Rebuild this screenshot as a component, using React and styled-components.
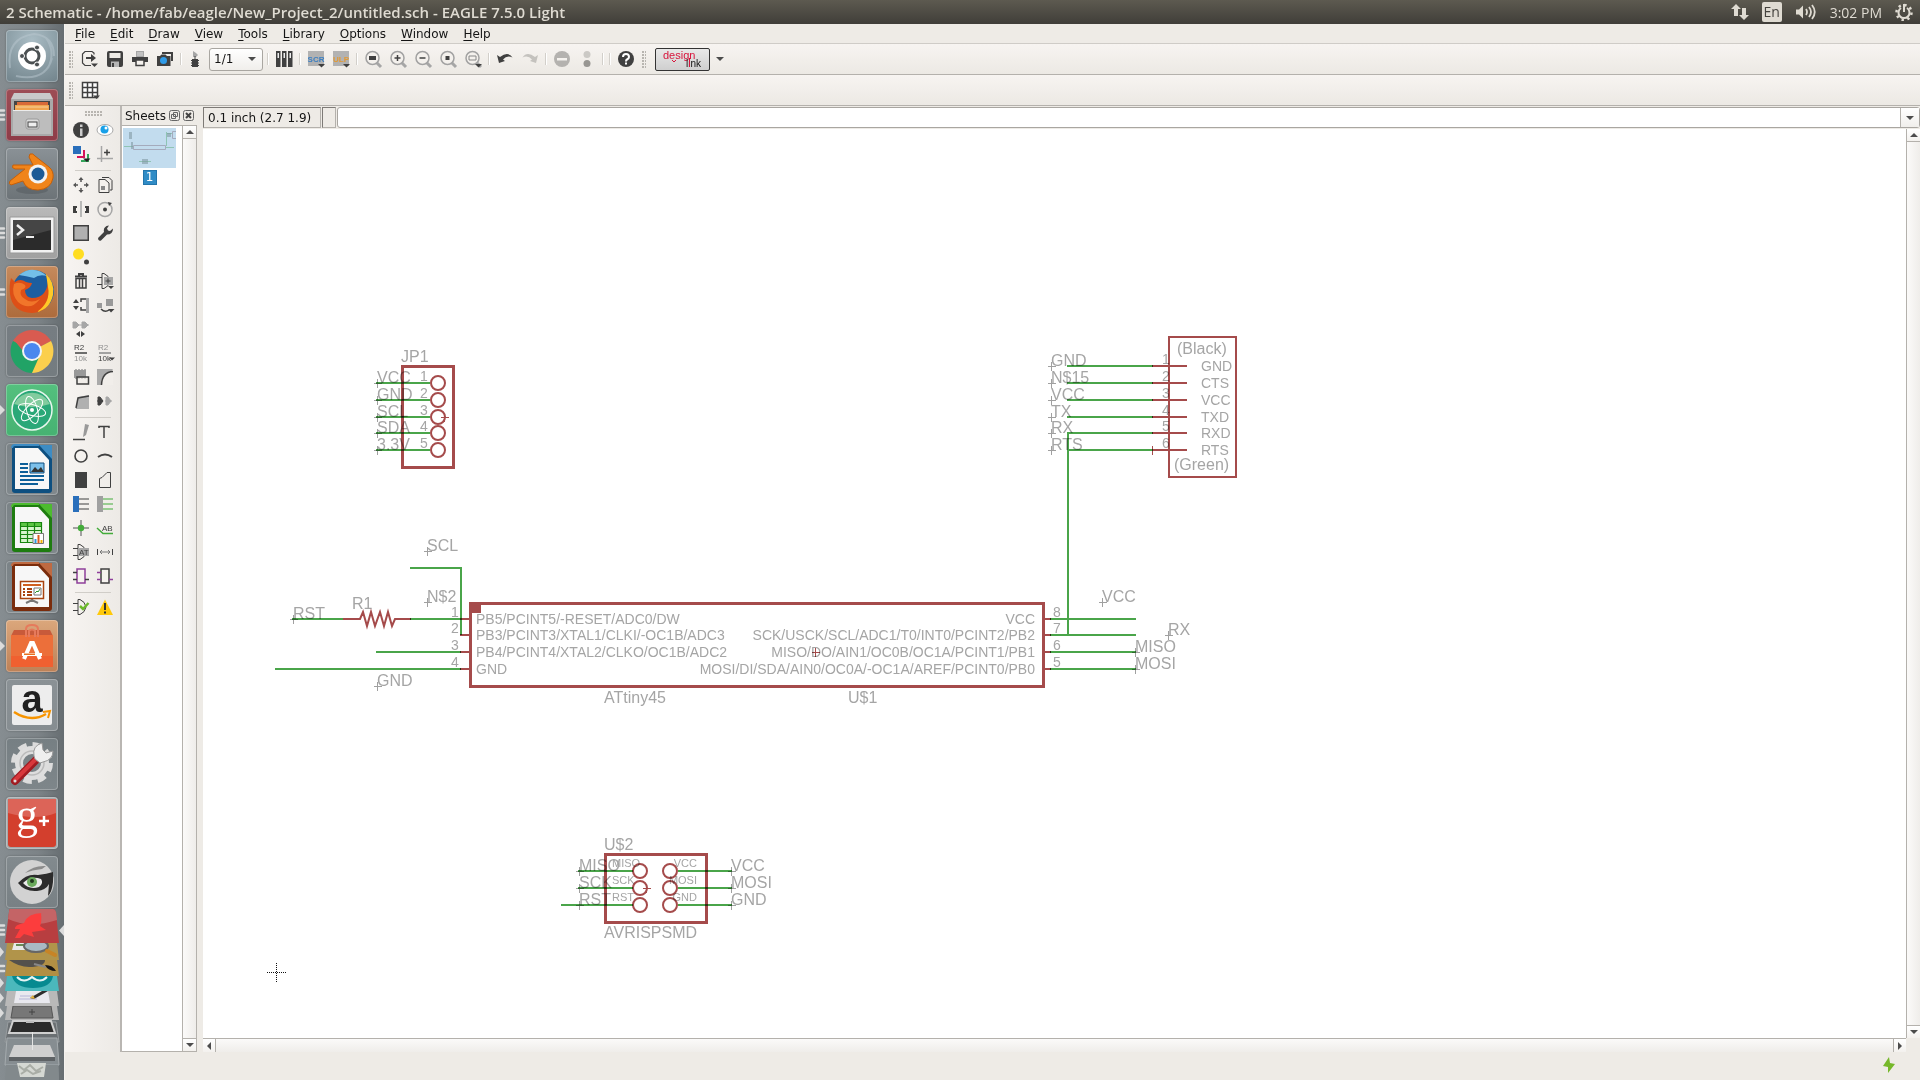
import React from "react";
import styled, { createGlobalStyle } from "styled-components";

const wire = "#4aa54a";
const part = "#a54b4b";
const label = "#a5a5a5";
const ink = "#404040";
const soft = "#a6a6a6";

const GlobalStyle = createGlobalStyle`
  * {
    box-sizing: border-box;
  }

  html, body, #root {
    height: 100%;
  }

  body {
    margin: 0;
    overflow: hidden;
    background: #eeebe6;
    color: #141414;
    font-family: "DejaVu Sans", sans-serif;
    font-size: 12px;
  }

  button {
    border: 0;
    padding: 0;
    background: none;
    color: inherit;
    font: inherit;
  }
`;

/* ---------- small toolbar icons, drawn on a 16px grid ---------- */

const more = <path d="M10 13h7l-3.500 3.500z" fill={ink} />;
const lens = (
  <>
    <path d="M11 11l5 5" stroke={soft} strokeWidth="3" />
    <circle cx="7.500" cy="7" r="6.500" fill="#f4f1ed" stroke="#a2a2a2" strokeWidth="1.500" />
  </>
);
const gate = (
  <path d="M5 .5h2q5 2 6 7.500q-1 5.500-6 7.500h-2zM0 4.500h5M0 11.500h5" fill="none" stroke={ink} />
);

const icons = {
  open: (
    <>
      <path d="M12 3.500V2L10 .500H3L.500 3v9L3 14.500h6" fill="none" stroke={ink} strokeWidth="1.200" />
      <path d="M4 6h5V3l5 4-5 4V8H4z" fill={ink} />
      <path d="M9 12.500h7L12.500 16z" fill={ink} />
    </>
  ),
  save: (
    <>
      <path d="M2 0h12q2 0 2 2v12q0 2-2 2H2q-2 0-2-2V2Q0 0 2 0z" fill={ink} />
      <path d="M2.500 2h11v5h-11z" fill="#eeebe6" />
      <path d="M4 10.500h8V16H4z" fill="#b5b5b5" />
      <path d="M5 12h2v4H5z" fill={ink} />
    </>
  ),
  print: (
    <>
      <path d="M4 0h8v6H4z" fill={soft} />
      <path d="M5 2h6M5 4h6" stroke="#ddd" />
      <path d="M0 6h16v5H0z" fill={ink} />
      <path d="M4 9h8v5.500H4z" fill="#f5f2ee" stroke={ink} strokeWidth="1.500" />
    </>
  ),
  cam: (
    <>
      <path d="M5 1h11v9h-2V3H5z" fill={ink} />
      <path d="M0 5h3l1.500-1.500h4L10 5h3.500v10H0z" fill={ink} />
      <circle cx="6.500" cy="9.500" r="3.500" fill="#2f9be8" />
    </>
  ),
  board: (
    <>
      <path d="M6 0l3 2 2 2-2 2H6z" fill={soft} />
      <path d="M5 8h6v8H5z" fill={ink} />
      <path d="M4 9.500h8M4 12h8M4 14.500h8M8 5v4" stroke={ink} />
    </>
  ),
  library: (
    <>
      <path d="M0 0h4.500v16H0zM6 0h4.500v16H6zM12 0h4.500v16H12z" fill={ink} />
      <path d="M1.500 2h1.500v5H1.500zM7.500 2H9v5H7.500zM13.500 2H15v5h-1.500z" fill="#eee" />
    </>
  ),
  scr: (
    <>
      <path d="M0 0h16v15H0z" fill="#b2b2b2" />
      <text x="8" y="11" textAnchor="middle" fontSize="8" fontWeight="700" fill="#3d7fc0">SCR</text>
      {more}
    </>
  ),
  ulp: (
    <>
      <path d="M0 0h16v15H0z" fill="#b2b2b2" />
      <text x="8" y="11" textAnchor="middle" fontSize="8" fontWeight="700" fill="#e29a36">ULP</text>
      {more}
    </>
  ),
  zoomFit: <>{lens}<path d="M4 5h7v4H4z" fill={ink} /></>,
  zoomIn: <>{lens}<path d="M4.500 7h6M7.500 4v6" stroke={ink} strokeWidth="1.500" /></>,
  zoomOut: <>{lens}<path d="M4.500 7h6" stroke={ink} strokeWidth="1.500" /></>,
  zoomDot: <>{lens}<path d="M5.500 5h4v4h-4z" fill={ink} /></>,
  zoomArea: <>{lens}<path d="M4 5h7v4H4z" fill="none" stroke="#888" />{more}</>,
  undo: <path d="M0 4l2 8 6-2-2-1.500Q10 4 15.500 6.500 11 0 3 6z" fill={ink} />,
  redo: <path d="M16 4l-2 8-6-2 2-1.500Q6 4 .5 6.500 5 0 13 6z" fill="#c4c2be" />,
  stop: (
    <>
      <circle cx="8" cy="8" r="8" fill="#b4b2af" />
      <path d="M3 7h10v2.500H3z" fill="#f5f2ee" />
    </>
  ),
  go: (
    <>
      <circle cx="8" cy="3.500" r="3.500" fill="#cbc9c5" />
      <circle cx="8" cy="12.500" r="3.500" fill="#989692" />
    </>
  ),
  help: (
    <>
      <circle cx="8" cy="8" r="8" fill={ink} />
      <path d="M5 6q0-3 3-3t3 3q0 1.500-2 2.500-1 .5-1 2" fill="none" stroke="#fff" strokeWidth="2" />
      <path d="M7 11.500h2v2H7z" fill="#fff" />
    </>
  ),
  grid: (
    <>
      <path d="M.500 .500h15v15H.500zM.500 5.500h15M.500 10.500h15M5.500 .500v15M10.500 .500v15" fill="#fff" stroke={ink} strokeWidth="1.500" />
      <path d="M11 13.500h7L14.500 17z" fill={ink} />
    </>
  ),
  info: (
    <>
      <circle cx="8" cy="8" r="8" fill={ink} />
      <path d="M7 2.500h2.500V5H7zM7 6.500h2.500V14H7z" fill="#ccc" />
    </>
  ),
  show: (
    <>
      <ellipse cx="8" cy="8" rx="8" ry="5.500" fill="#fff" stroke="#aaa" />
      <circle cx="7.500" cy="7.500" r="4" fill="#18a0e8" />
      <circle cx="9" cy="6" r="1.500" fill="#fff" />
    </>
  ),
  display: (
    <>
      <path d="M0 0h8v8H0z" fill="#2a6fbb" />
      <path d="M10 4h2v8H4v-2h6z" fill="#d4145a" />
      <path d="M14 8h2v8H8v-2h6z" fill="#35a35a" />
      <path d="M10 12.500h7.500L14 16z" fill="#222" />
    </>
  ),
  mark: (
    <>
      <path d="M4.500 0v16M0 12.500h16" stroke={soft} strokeWidth="1.500" />
      <path d="M7 6.500h6M10 3.500v6" stroke={ink} strokeWidth="1.500" />
    </>
  ),
  move: (
    <>
      <path d="M8 0l2.500 3h-5zM8 16l2.500-3h-5zM0 8l3-2.500v5zM16 8l-3-2.500v5z" fill="#555" />
      <path d="M8 2v3M8 11v3M2 8h3M11 8h3" stroke="#555" strokeWidth="1.500" />
    </>
  ),
  copy: (
    <>
      <path d="M5 .500h7l3 3V13h-2" fill="none" stroke={ink} />
      <path d="M2 2.500h6l4 3.500v9.500H2z" fill="#f4f1ed" stroke={ink} />
      <path d="M4 9h4v4H4z" fill="#888" />
    </>
  ),
  mirror: (
    <>
      <path d="M0 5h4v2H3v3h1v2H0zM16 5h-4v2h1v3h-1v2h4z" fill={ink} />
      <path d="M8 0v16" stroke={soft} strokeWidth="1.500" />
    </>
  ),
  rotate: (
    <>
      <circle cx="8" cy="8.500" r="7" fill="none" stroke={soft} strokeWidth="1.500" />
      <circle cx="8" cy="8.500" r="2" fill={ink} />
      <path d="M11 1l4 1-3 3z" fill={ink} />
    </>
  ),
  group: <path d="M.750 .750h14.500v14.500H.750z" fill="#b0b0b0" stroke={ink} strokeWidth="1.500" />,
  change: (
    <path d="M1 13l6-6q-1-4 2.500-6l2.500-.500-2 3 1 2 2 .500 3-2.500q0 6-6 6l-6 6q-3 1-3-2.500z" fill={ink} />
  ),
  paste: (
    <>
      <circle cx="5.500" cy="5" r="5.500" fill="#ffdd21" />
      <circle cx="13.500" cy="13" r="2.500" fill={ink} />
    </>
  ),
  trash: (
    <>
      <path d="M2 3.500h12M6 3V1h4v2" fill="none" stroke={ink} strokeWidth="2" />
      <path d="M3 5.500h10V15H3z" fill="none" stroke={ink} strokeWidth="1.500" />
      <path d="M6.500 5v10M9.500 5v10" stroke={ink} strokeWidth="1.500" />
    </>
  ),
  add: (
    <>
      {gate}
      <path d="M7 4h9v8H7z" fill={soft} />
      <path d="M8.500 8h5M11 5.500v5" stroke={ink} />
      <path d="M11 13h6l-3 3z" fill={ink} />
    </>
  ),
  pinswap: (
    <>
      <path d="M13 1h3v15h-3z" fill={soft} />
      <path d="M13 2H8v3M13 13H8v-3" fill="none" stroke={ink} strokeWidth="1.500" />
      <path d="M0 6l3-4 3 4zM0 9h6l-3 4z" fill={ink} />
    </>
  ),
  replace: (
    <>
      <path d="M0 6h5v5H0zM9 2h7v7H9z" fill="#999" />
      <path d="M4 12q4 4 8 1" fill="none" stroke={ink} strokeWidth="1.500" />
      <path d="M11 12h6.500L14 15.500z" fill={ink} />
    </>
  ),
  gateswap: (
    <>
      <path d="M0 1h3l3 3-3 3H0zM9 1h3l3 3-3 3H9zM5 4h11" fill={soft} stroke={soft} />
      <path d="M3 13l4-3v6zM12 13l-4-3v6z" fill={ink} />
    </>
  ),
  name: (
    <>
      <text x="1" y="5" fontSize="8" fill={ink}>R2</text>
      <path d="M2 8h12" stroke={ink} strokeWidth="1.500" />
      <text x="1" y="16" fontSize="8" fill="#8f8f8f">10k</text>
    </>
  ),
  value: (
    <>
      <text x="1" y="5" fontSize="8" fill="#8f8f8f">R2</text>
      <path d="M2 8h12" stroke="#888" strokeWidth="1.500" />
      <text x="1" y="16" fontSize="8" fill={ink}>10k</text>
      <path d="M12 12.500h6L15 15.500z" fill={ink} />
    </>
  ),
  smash: (
    <>
      <path d="M1 1h12v8H1z" fill="#999" />
      <path d="M3 0v10M6 0v10M9 0v10M12 0v10" stroke="#999" strokeWidth="1.500" />
      <path d="M4 8h11.500v7H4z" fill="#eeebe6" fillOpacity=".600" stroke={ink} strokeWidth="1.500" />
    </>
  ),
  miter: (
    <>
      <path d="M0 0h16L4 16H0z" fill="#aaa" />
      <path d="M16 2Q4 3 4 16h12z" fill="#f1eeea" />
      <path d="M16 2.500Q5 3 4.500 16" fill="none" stroke={ink} strokeWidth="1.500" />
    </>
  ),
  split: (
    <>
      <path d="M5 4l11-2v14H3z" fill="#b0b0b0" />
      <path d="M3 15L5 5l11-2" fill="none" stroke={ink} strokeWidth="1.500" />
    </>
  ),
  invoke: (
    <>
      <path d="M0 8h6M1 4h2l3 4-3 4H1z" fill={ink} stroke={ink} />
      <path d="M8 8h7M9 4h2l3 4-3 4H9z" fill={soft} stroke={soft} />
    </>
  ),
  line: (
    <>
      <path d="M0 15.500h12" stroke={ink} strokeWidth="1.500" />
      <path d="M12 0l4 1-3 10-3 2z" fill="#999" />
    </>
  ),
  text: <path d="M2 4V2.500h10V4M7 2.500V14" fill="none" stroke={ink} strokeWidth="1.500" />,
  circle: <circle cx="8" cy="8" r="6" fill="none" stroke={ink} strokeWidth="1.600" />,
  arc: <path d="M1 9q7-5 14 0" fill="none" stroke={ink} strokeWidth="2" />,
  rect: <path d="M2 0h12v16H2z" fill={ink} />,
  polygon: <path d="M2.500 15.500V6.500L5 5.500 10 .500h3.500v15z" fill="none" stroke={ink} />,
  bus: (
    <>
      <path d="M0 0h6v16H0z" fill="#2a6fbb" />
      <path d="M6 3h10M6 8h10M6 13h10" stroke={ink} strokeWidth="1.200" />
    </>
  ),
  net: (
    <>
      <path d="M0 0h6v16H0z" fill="#a0a0a0" />
      <path d="M6 3h10M6 8h10M6 13h10" stroke="#43ac3a" strokeWidth="1.200" />
    </>
  ),
  junction: (
    <>
      <path d="M0 8h16M8 0v16" stroke="#888" strokeWidth="1.500" />
      <circle cx="8" cy="8" r="3.200" fill="#43ac3a" />
    </>
  ),
  label: (
    <>
      <path d="M0 8l6 5.500h10" fill="none" stroke="#43ac3a" strokeWidth="1.500" />
      <text x="5" y="11" fontSize="8" fill={ink}>AB</text>
    </>
  ),
  attribute: (
    <>
      {gate}
      <path d="M5 4h11v8H5z" fill={soft} />
      <text x="6" y="11" fontSize="8" fill={ink}>AT</text>
    </>
  ),
  dimension: (
    <>
      <path d="M.500 5v6M15.500 5v6" stroke={ink} />
      <path d="M3 8h10M5 6L3 8l2 2M11 6l2 2-2 2" fill="none" stroke="#777" />
    </>
  ),
  module: (
    <>
      <path d="M4 1h8v14H4z" fill="#f6f3ef" stroke="#8f3f9b" strokeWidth="1.500" />
      <path d="M0 4.500h4M0 11.500h4M12 11.500h4" stroke={ink} strokeWidth="1.500" />
    </>
  ),
  port: (
    <>
      <path d="M4 1h8v14H4z" fill="#f6f3ef" stroke={ink} strokeWidth="1.500" />
      <path d="M0 4.500h4M0 11.500h4M12 11.500h4" stroke="#8f3f9b" strokeWidth="1.500" />
    </>
  ),
  erc: (
    <>
      {gate}
      <path d="M7 7l3 3 5.500-6" fill="none" stroke="#6cba2c" strokeWidth="2.500" />
    </>
  ),
  errors: (
    <>
      <path d="M8 .500L16 16H0z" fill="#ffc90a" />
      <path d="M8 4v7M8 12.500v2" stroke="#333" strokeWidth="2" />
    </>
  ),
};

const toolColumns = [
  [
    "info", "show", "display", "mark",
  ],
  [
    "move", "copy", "mirror", "rotate", "group", "change", "paste", null,
    "trash", "add", "pinswap", "replace", "gateswap", null, "name", "value",
    "smash", "miter", "split", "invoke",
  ],
  [
    "line", "text", "circle", "arc", "rect", "polygon", "bus", "net",
    "junction", "label", "attribute", "dimension", "module", "port",
  ],
  ["erc", "errors"],
];

function Icon({ name }) {
  return (
    <Glyph width="16" height="16" viewBox="0 0 16 16" aria-hidden="true">
      {icons[name]}
    </Glyph>
  );
}

function ToolButton({ name, narrow }) {
  return (
    <BarButton aria-label={name} $narrow={narrow}>
      <Icon name={name} />
    </BarButton>
  );
}

/* ---------- launcher ---------- */

const AmazonLetter = styled.text`
  fill: #202020;
  font-family: "Liberation Sans", sans-serif;
  font-size: 38px;
  font-weight: 700;
`;

const GoogleLetter = styled.text`
  fill: #fff;
  font-family: "Liberation Serif", serif;
  font-size: 44px;
`;

function Doc({ color, dark, children }) {
  return (
    <>
      <path d="M9 2h25l12 13v32q0 3-3 3H9q-3 0-3-3V5q0-3 3-3z" fill={dark} />
      <path d="M33 2h13v14z" fill={color} />
      <path d="M9 5h23l11 12v29H9z" fill="#f7f7f7" />
      <path d="M6 5q0-3 3-3h24" fill="none" stroke={color} strokeWidth="2" />
      {children}
    </>
  );
}

const apps = [
  {
    name: "Dash",
    bg: "radial-gradient(circle at 50% 20%, #a9bcc4, #71838b)",
    art: (
      <>
        <path d="M4 38Q0 8 28 4q20 2 20 22M10 46q30 6 36-18M40 8q10 14 2 30" fill="none" stroke="#b9c8cf" strokeOpacity=".500" strokeWidth="2" />
        <circle cx="26" cy="26" r="14" fill="#fff" />
        <circle cx="26" cy="26" r="7" fill="none" stroke="#4b5052" strokeWidth="3" />
        <circle cx="16" cy="26" r="2.500" fill="#4b5052" stroke="#fff" />
        <circle cx="31" cy="17.500" r="2.500" fill="#4b5052" stroke="#fff" />
        <circle cx="31" cy="34.500" r="2.500" fill="#4b5052" stroke="#fff" />
      </>
    ),
  },
  {
    name: "Files",
    bg: "linear-gradient(#9d4d55, #8e3c48)",
    pips: 3,
    art: (
      <>
        <path d="M8 4h36l3 6v37H5V10z" fill="#c9c9c9" />
        <path d="M5 10h42v37H5z" fill="#a9a9a9" />
        <path d="M8 12h36v10H8z" fill="#454545" />
        <path d="M11 13h31v3H11z" fill="#d86a38" />
        <path d="M9 16h34v6H9z" fill="#f0a550" />
        <path d="M10 18h32" stroke="#f7d19a" />
        <path d="M7 21h38v24H7z" fill="#bdbdbd" />
        <path d="M7 21.500h38" stroke="#ececec" />
        <rect x="20" y="30" width="13" height="10" rx="2" fill="#ddd" stroke="#999" />
        <rect x="22" y="33" width="9" height="5" fill="#eee" stroke="#444" />
      </>
    ),
  },
  {
    name: "Blender",
    bg: "linear-gradient(#8a9196, #6c7377)",
    art: (
      <>
        <ellipse cx="26" cy="42" rx="16" ry="4" fill="#4b5154" opacity=".400" />
        <path d="M24 6q3-1 5 2l14 11q5 4 4 11-2 11-15 12-12 0-15-9L5 37q-3-1-1-4l15-12H9q-4-1-2-4h20l-4-8z" fill="#f0841a" stroke="#c65f08" />
        <circle cx="32" cy="26" r="9.500" fill="#f2f2f2" />
        <circle cx="32" cy="26" r="6.500" fill="#1b5a96" />
      </>
    ),
  },
  {
    name: "Terminal",
    bg: "linear-gradient(#b9b9b9, #a0a0a0)",
    pips: 3,
    art: (
      <>
        <path d="M4 10h44v36H4z" fill="#f2f2f2" stroke="#999" />
        <path d="M7 13h38v30H7z" fill="#2b2b2b" />
        <path d="M7 13h38v10L7 33z" fill="#454545" />
        <path d="M11 18l6 5-6 5" fill="none" stroke="#eee" strokeWidth="2.500" />
        <path d="M20 30h8" stroke="#eee" strokeWidth="2" />
      </>
    ),
  },
  {
    name: "Firefox",
    bg: "linear-gradient(#c68a5c, #ad6b3c)",
    pips: 2,
    art: (
      <>
        <circle cx="27" cy="25" r="21" fill="#1d5e9f" />
        <path d="M13 9q14-11 28 1-8-2-13 2-8-2-15-3z" fill="#73bfe8" />
        <path d="M5 12l4 4q5-4 11 0 3 1 6 1-1 5-7 7 0 7 7 8 8 0 12-5 6-8 2-18 8 8 6 20-3 17-20 18Q6 46 4 28q-1-9 1-16z" fill="#dd4f17" />
        <path d="M40 8q9 8 7 21-3 14-16 17 14-10 11-25-1-7-2-13z" fill="#ffc928" />
        <path d="M8 18q6-3 11 1 2 3-4 5-2 6 4 9 6 5 15 0-10 13-22 3-7-8-4-18z" fill="#f1762a" />
      </>
    ),
  },
  {
    name: "Chrome",
    bg: "linear-gradient(#767d82, #747c80)",
    art: (
      <>
        <path d="M26 26L7 16A22 22 0 0 1 45 16z" fill="#d95b50" />
        <path d="M26 26l19-10A22 22 0 0 1 26 48z" fill="#fbcf4d" />
        <path d="M26 26L7 16A22 22 0 0 0 26 48l8-18z" fill="#21a366" />
        <path d="M17 26L8 15h30l8 1H27z" fill="#d95b50" />
        <circle cx="26" cy="26" r="10" fill="#f3f3f3" />
        <circle cx="26" cy="26" r="8" fill="#4b87ee" />
      </>
    ),
  },
  {
    name: "Atom",
    bg: "linear-gradient(#54c07e, #46b272)",
    pips: "arrow",
    art: (
      <>
        <circle cx="26" cy="26" r="20" fill="#2aa878" stroke="#e8f7ee" strokeWidth="1.500" />
        <path d="M8 20a20 20 0 0 1 36 0q-18 6-36 0z" fill="#a8dcae" opacity=".700" />
        <ellipse cx="26" cy="26" rx="14" ry="5.500" fill="none" stroke="#fff" transform="rotate(15 26 26)" />
        <ellipse cx="26" cy="26" rx="14" ry="5.500" fill="none" stroke="#fff" transform="rotate(75 26 26)" />
        <ellipse cx="26" cy="26" rx="14" ry="5.500" fill="none" stroke="#fff" transform="rotate(135 26 26)" />
        <circle cx="26" cy="26" r="2" fill="#fff" />
      </>
    ),
  },
  {
    name: "Writer",
    bg: "linear-gradient(#7b8387, #80888c)",
    art: (
      <Doc color="#3d8cc4" dark="#0d4f80">
        <path d="M14 21h8M14 25h8M14 29h8M14 33h24M14 37h24M14 41h18" stroke="#0d5f99" strokeWidth="2" />
        <path d="M24 20h14v10H24z" fill="#7cc0ea" stroke="#0d4f80" />
        <path d="M25 29l4-5 3 3 3-3 3 5z" fill="#333" />
      </Doc>
    ),
  },
  {
    name: "Calc",
    bg: "linear-gradient(#7b8387, #80888c)",
    art: (
      <Doc color="#4dbb2f" dark="#1e7c10">
        <path d="M14 20h22v21H14z" fill="#d6f5cd" />
        <path d="M14 20h22v4H14z" fill="#5cc544" />
        <path d="M14.500 20.500h21v20h-21zM14 24.500h22M14 28.500h22M14 32.500h22M14 36.500h22M21.500 20v21M28.500 20v21" fill="none" stroke="#178510" strokeWidth="1.200" />
        <path d="M27 31.500h10.500v10H27z" fill="#fff" stroke="#777" />
        <path d="M28.500 37h2v4h-2z" fill="#2b98dc" />
        <path d="M31.500 33h2v8h-2z" fill="#dc5a1c" />
        <path d="M34.500 38h2v3h-2z" fill="#f0b400" />
      </Doc>
    ),
  },
  {
    name: "Impress",
    bg: "linear-gradient(#7b8387, #80888c)",
    art: (
      <Doc color="#bf6a42" dark="#7a2c0c">
        <path d="M26 37v4M20 42l6-3 6 3" fill="none" stroke="#777" strokeWidth="2" />
        <path d="M14.500 20.500h23v17h-23z" fill="#fff" stroke="#a84310" strokeWidth="1.500" />
        <path d="M17 24h18" stroke="#d06020" strokeWidth="2" />
        <path d="M17 28h2M17 31h2M17 34h2M21 28h5M21 31h5M21 34h5" stroke="#a84310" strokeWidth="2" />
        <path d="M28 27h7v7h-7z" fill="#fff" stroke="#777" />
        <path d="M29 32l2-2 1 1 2-3" fill="none" stroke="#2b9a30" />
      </Doc>
    ),
  },
  {
    name: "Software",
    bg: "linear-gradient(#dba77c, #bd8157)",
    pips: "arrow",
    art: (
      <>
        <path d="M8 10h36l3 6H5z" fill="#c85a3a" />
        <path d="M5 15h42v32H5z" fill="#ec6f3a" />
        <path d="M5 36h42v11H5z" fill="#f06030" />
        <path d="M20 17V9q0-4 6-4t6 4v8M23 17v-6q3-3 6 0v6" fill="none" stroke="#e67a5c" strokeWidth="2" />
        <path d="M18 39l7-16h2l7 16" fill="none" stroke="#fff" strokeWidth="4" />
        <path d="M16 33h20v3H16z" fill="#fff" />
        <path d="M18 33.500h11v1.500H18z" fill="#e87020" />
      </>
    ),
  },
  {
    name: "Amazon",
    bg: "linear-gradient(#8a9195, #868d91)",
    art: (
      <>
        <rect x="6" y="6" width="40" height="40" rx="2" fill="#ededed" />
        <AmazonLetter x="26" y="33" textAnchor="middle">a</AmazonLetter>
        <path d="M8 33q17 11 32 2" fill="none" stroke="#f79400" strokeWidth="2.500" />
        <path d="M37 33l7-1-2 7" fill="none" stroke="#f79400" strokeWidth="2" />
      </>
    ),
  },
  {
    name: "Settings",
    bg: "linear-gradient(#767f83, #7e868a)",
    art: (
      <>
        <circle cx="26" cy="25" r="18.500" fill="none" stroke="#dcdcdc" strokeWidth="5" strokeDasharray="8.530 6" />
        <circle cx="26" cy="25" r="13" fill="none" stroke="#dedede" strokeWidth="8" />
        <circle cx="26" cy="25" r="12" fill="none" stroke="#bbb" strokeWidth="1.500" />
        <path d="M9 43L32 20" stroke="#a01c22" strokeWidth="8" strokeLinecap="round" />
        <path d="M9 42L31 20" stroke="#d8383c" strokeWidth="4" strokeLinecap="round" />
        <path d="M28 18q-2-10 8-13l1 7 3 3 7-2q0 9-10 11l-3 1-5-4z" fill="#efefef" stroke="#999" />
        <circle cx="9" cy="43" r="1.500" fill="#ddd" />
      </>
    ),
  },
  {
    name: "Google+",
    bg: "#a3a9ab",
    art: (
      <>
        <rect x="2" y="2" width="48" height="48" rx="3" fill="#d33f2d" />
        <path d="M2 2h48v14Q30 24 2 16z" fill="#dc6458" />
        <GoogleLetter x="21" y="32" textAnchor="middle">g</GoogleLetter>
        <path d="M33 24h10M38 19v10" stroke="#fff" strokeWidth="2.500" />
      </>
    ),
  },
  {
    name: "Eye",
    bg: "linear-gradient(#828a8e, #788084)",
    art: (
      <>
        <circle cx="26" cy="26" r="22" fill="#d2d2d2" />
        <path d="M19 17Q28 9 40 10L36 13Q26 14 19 17z" fill="#8b8b8b" />
        <path d="M12 27q9-10 20-8 9-1 15-3v10q-1 10-5 14l1-12q-3 6-12 7-12 1-19-8z" fill="#2c2c2c" />
        <path d="M17 27q8-8 18-4 3 4-2 8-10 3-16-4z" fill="#e9e9e9" />
        <circle cx="26" cy="26" r="5" fill="#6aa95c" />
        <circle cx="26" cy="25" r="2" fill="#20381e" />
      </>
    ),
  },
];

function Pips({ kind }) {
  return (
    <PipColumn width="6" height="16" viewBox="0 0 6 16" aria-hidden="true">
      {kind === "arrow" && <path d="M0 3l5 5-5 5z" fill="#dcdcdc" />}
      {kind === 3 && (
        <path d="M0 3.500h4M0 8h4M0 12.500h4" stroke="#dcdcdc" strokeWidth="2.500" strokeLinecap="round" />
      )}
      {kind === 2 && (
        <path d="M0 5.500h4M0 10.500h4" stroke="#dcdcdc" strokeWidth="2.500" strokeLinecap="round" />
      )}
    </PipColumn>
  );
}

// the launcher entries that are folded together at the bottom
function FoldedApps() {
  return (
    <Stack width="64" height="171" viewBox="0 0 64 171" aria-hidden="true">
      <path d="M8 129h48l2 14 1 28H5V143z" fill="#858c90" />
      <path d="M8 113h48l3 20H5z" fill="#6a6f72" stroke="#989da0" />
      <path d="M13 112h38l4 12H9z" fill="#2b2b2b" stroke="#cfcfcf" strokeWidth="2" />
      <path d="M26 113h8" stroke="#bbb" strokeWidth="2" />
      <path d="M7 97h50l2 14H5z" fill="#b5b5b5" />
      <path d="M13 97h38l2 12H11z" fill="#777" stroke="#555" />
      <path d="M29 103h6M32 100v6" stroke="#444" />
      <path d="M7 82h50l2 15H5z" fill="#b9b9b9" />
      <path d="M16 82h32l2 12H14z" fill="#e9e9ef" />
      <path d="M20 87h14M19 90h18" stroke="#b5b5d8" />
      <path d="M30 89l12-7h6l-14 8z" fill="#2c2c2c" />
      <path d="M30 89l3-3 2 4z" fill="#e0b040" />
      <path d="M7 67h50l2 15H5z" fill="#4bb8bc" />
      <path d="M12 67h41q-2 12-20 12T12 67z" fill="#078a90" />
      <path d="M17 68q7 7 15 0 8 7 15 0" fill="none" stroke="#e6f4f4" strokeWidth="2" />
      <path d="M7 51h50l2 16H5z" fill="#b18f44" />
      <path d="M9 51h36q0 7-16 7-10 0-20-7z" fill="#54514c" />
      <path d="M34 55l12 3" stroke="#888" strokeWidth="2" />
      <path d="M45 56q8 0 11 6-8 0-11-6z" fill="#151515" />
      <path d="M7 34h50l2 17H5z" fill="#b1944a" />
      <path d="M14 34h18v7H12z" fill="#e9e9e9" />
      <path d="M16 36h12" stroke="#688b54" strokeWidth="2" />
      <ellipse cx="36" cy="37" rx="12" ry="6" fill="#a9bac4" stroke="#666" strokeWidth="2" />
      <path d="M47 42l8 4" stroke="#c78426" strokeWidth="4" strokeLinecap="round" />
      <path d="M10 0h43q2 0 3 3l3 31H5L9 3q0-3 1-3z" fill="#b83e40" />
      <path d="M10 0h43q2 0 3 3l1 8Q30 20 8 10L9 3q0-3 1-3z" fill="#c46466" />
      <path d="M42 4q-14 0-18 10-10 2-9 6l5 0-5 9h5l4-4 10 3-2-5 14-2-6-4q2-4 1-13z" fill="#fc3d3d" />
      <path d="M64 16v11l-5-5.500z" fill="#dcdcdc" />
      <path d="M0 16.500h4M0 21h4M0 25.500h4M0 57h4M0 62h4" stroke="#dcdcdc" strokeWidth="2.500" strokeLinecap="round" />
      <path d="M0 38l4 5-4 5zM0 69l4 5-4 5zM0 84l4 5-4 5zM0 99l4 5-4 5z" fill="#dcdcdc" />
      <path d="M7 129h50l2 27H5z" fill="#868d91" stroke="#a5abae" />
      <path d="M14 136h36l5 12v4H9v-4z" fill="#cfcfcf" />
      <path d="M9 148h46v4H9z" fill="#5e6265" />
      <path d="M32.500 123v18" stroke="#e5e5e5" />
      <path d="M6 156h52l1 15H5z" fill="#82898c" />
      <path d="M17 154h29l-2 14H20z" fill="#d5d8d3" />
      <path d="M19 157l5 4 6-5 6 6 7-4M21 165l6-4 6 4 8-3" fill="none" stroke="#a9ada6" strokeWidth="2" />
    </Stack>
  );
}

/* ---------- schematic sheet ---------- */

function Txt({ x, y, size = 16, end, children }) {
  return (
    <text x={x} y={y} fontSize={size} textAnchor={end ? "end" : "start"} fill={label}>
      {children}
    </text>
  );
}

function Cross({ x, y, color = "#a0a0a0" }) {
  return <path d={`M${x - 3} ${y + 0.5}h8M${x + 0.5} ${y - 4}v9`} stroke={color} fill="none" />;
}

const jp1 = [["VCC", 383], ["GND", 400], ["SCL", 417], ["SDA", 433], ["3.3V", 450]];
const ftdi = [
  ["GND", "GND", 366], ["N$15", "CTS", 383], ["VCC", "VCC", 400],
  ["TX", "TXD", 417], ["RX", "RXD", 433], ["RTS", "RTS", 450],
];
const chip = [
  [619, "PB5/PCINT5/-RESET/ADC0/DW", "VCC"],
  [635, "PB3/PCINT3/XTAL1/CLKI/-OC1B/ADC3", "SCK/USCK/SCL/ADC1/T0/INT0/PCINT2/PB2"],
  [652, "PB4/PCINT4/XTAL2/CLKO/OC1B/ADC2", "MISO/DO/AIN1/OC0B/OC1A/PCINT1/PB1"],
  [669, "GND", "MOSI/DI/SDA/AIN0/OC0A/-OC1A/AREF/PCINT0/PB0"],
];
const isp = [["MISO", "VCC", 871], ["SCK", "MOSI", 888], ["RST", "GND", 905]];
const netLabels = [
  ["SCL", 427, 551], ["N$2", 427, 602], ["RST", 293, 619], ["GND", 377, 686],
  ["VCC", 1102, 602], ["RX", 1168, 635], ["MISO", 1135, 652], ["MOSI", 1135, 669],
];

function Schematic() {
  return (
    <Drawing width="1100" height="890" viewBox="203 129 1100 890" role="img" aria-label="Schematic sheet">
      <g>
        <Txt x={401} y={362}>JP1</Txt>
        {jp1.map(([name, y], i) => (
          <g key={name}>
            <Txt x={377} y={y}>{name}</Txt>
            <Txt x={420} y={y - 2} size={14}>{i + 1}</Txt>
            <Cross x={377} y={y} />
          </g>
        ))}
        {netLabels.map(([name, x, y]) => (
          <g key={name + x}>
            <Txt x={x} y={y}>{name}</Txt>
            <Cross x={x} y={y} />
          </g>
        ))}
        <Txt x={352} y={609}>R1</Txt>
        {chip.map(([y, left, right], i) => (
          <g key={y}>
            <Txt x={451} y={y - 2} size={14}>{i + 1}</Txt>
            <Txt x={1053} y={y - 2} size={14}>{8 - i}</Txt>
            <Txt x={476} y={y + 5} size={14}>{left}</Txt>
            <Txt x={1035} y={y + 5} size={14} end>{right}</Txt>
          </g>
        ))}
        <Txt x={604} y={703}>ATtiny45</Txt>
        <Txt x={848} y={703}>U$1</Txt>
        {ftdi.map(([net, pin, y], i) => (
          <g key={pin}>
            <Txt x={1051} y={y}>{net}</Txt>
            <Cross x={1051} y={y} />
            <Txt x={1162} y={y - 2} size={14}>{i + 1}</Txt>
            <Txt x={1201} y={y + 5} size={14}>{pin}</Txt>
          </g>
        ))}
        <Txt x={1177} y={354}>(Black)</Txt>
        <Txt x={1174} y={470}>(Green)</Txt>
        <Txt x={604} y={850}>U$2</Txt>
        <Txt x={604} y={938}>AVRISPSMD</Txt>
        {isp.map(([left, right, y]) => (
          <g key={y}>
            <Txt x={579} y={y}>{left}</Txt>
            <Cross x={579} y={y} />
            <Txt x={731} y={y}>{right}</Txt>
            <Cross x={731} y={y} />
            <Txt x={612} y={y - 4} size={11}>{left}</Txt>
            <Txt x={697} y={y - 4} size={11} end>{right}</Txt>
          </g>
        ))}
      </g>

      <Layer stroke={part}>
        <path d="M402.500 366.500h51v101h-51zM470.500 603.500h573v83h-573zM605.500 854.500h101v68h-101z" strokeWidth="3" strokeLinejoin="round" />
        <path d="M1169 337h67v140h-67z" strokeWidth="2" />
        <path d="M470 603h11v10h-11z" fill={part} stroke="none" />
        {jp1.map(([name, y]) => (
          <Pin key={name} cx="438" cy={y} r="7" />
        ))}
        {isp.map(([name, , y]) => (
          <g key={name}>
            <Pin cx="640" cy={y} r="7" />
            <Pin cx="670" cy={y} r="7" />
          </g>
        ))}
        {ftdi.map(([, pin, y]) => (
          <path key={pin} d={`M1152 ${y}h35`} strokeWidth="2" />
        ))}
        {chip.map(([y]) => (
          <path key={y} d={`M460 ${y}h9M1045 ${y}h6`} strokeWidth="2" />
        ))}
        <Zigzag d="M343 619H360l3-7 4 14 4-14 4 14 5-14 4 14 4-14 4 14 3-7H411" />
        <Cross x={444} y={417} color={part} />
        <Cross x={815} y={652} color={part} />
        <Cross x={646} y={888} color={part} />
        <path d="M1152.500 446v9" />
      </Layer>

      <Layer stroke={wire} strokeWidth="2">
        {jp1.map(([name, y]) => (
          <path key={name} d={`M376 ${y}h54`} />
        ))}
        {ftdi.map(([, pin, y]) => (
          <path key={pin} d={`M1067 ${y}h86`} />
        ))}
        {chip.map(([y]) => (
          <path key={y} d={`M1050 ${y}h86`} />
        ))}
        {isp.map(([name, , y], i) => (
          <path key={name} d={`M${i === 2 ? 561 : 578} ${y}H633M678 ${y}h54`} />
        ))}
        <path d="M292 619h51M410 619h51M376 652h85M275 669h186" />
        <path d="M410 568h51v67" />
        <path d="M1068 433v203" />
      </Layer>

      <Layer stroke="#111" strokeDasharray="1 1">
        <path d="M267 972.500h19M276.500 963v19" />
      </Layer>
    </Drawing>
  );
}

/* ---------- window ---------- */

const menus = ["File", "Edit", "Draw", "View", "Tools", "Library", "Options", "Window", "Help"];

function Arrow({ turn = 0 }) {
  return (
    <svg width="8" height="8" viewBox="0 0 8 8" aria-hidden="true">
      <path d="M0 2h8L4 6z" fill="#4c4c4c" transform={`rotate(${turn} 4 4)`} />
    </svg>
  );
}

function ScrollBar({ horizontal }) {
  return (
    <Track $horizontal={horizontal}>
      <ScrollButton aria-label="Scroll back" $horizontal={horizontal}>
        <Arrow turn={horizontal ? 90 : 180} />
      </ScrollButton>
      <ScrollButton aria-label="Scroll forward" $horizontal={horizontal} $last>
        <Arrow turn={horizontal ? 270 : 0} />
      </ScrollButton>
    </Track>
  );
}

function SystemTray() {
  return (
    <Tray>
      <svg width="18" height="18" viewBox="0 0 18 18" aria-hidden="true">
        <path d="M5 1l5 5H7v7H3V6H0zM13 17l-5-5h3V5h4v7h3z" fill="#dfdbd2" />
      </svg>
      <Keyboard>En</Keyboard>
      <svg width="22" height="18" viewBox="0 0 22 18" aria-hidden="true">
        <path d="M1 6.500h3l4-4v13l-4-4H1z" fill="#dfdbd2" />
        <path d="M11 6q2 3 0 6M14 4q4 5 0 10M17 2q5.500 7 0 14" fill="none" stroke="#dfdbd2" strokeWidth="1.800" />
      </svg>
      <time>3:02 PM</time>
      <svg width="18" height="18" viewBox="0 0 18 18" aria-hidden="true">
        <circle cx="9" cy="9.500" r="7.500" fill="none" stroke="#dfdbd2" strokeWidth="2.500" strokeDasharray="2.400 3.490" />
        <path d="M6 5a5.500 5.500 0 1 0 6 0" fill="none" stroke="#dfdbd2" strokeWidth="2" />
        <path d="M9 1v8" stroke="#dfdbd2" strokeWidth="2" />
      </svg>
    </Tray>
  );
}

export default function App() {
  return (
    <Screen>
      <GlobalStyle />
      <Panel>
        <Title>2 Schematic - /home/fab/eagle/New_Project_2/untitled.sch - EAGLE 7.5.0 Light</Title>
        <SystemTray />
      </Panel>
      <Desktop>
        <Launcher aria-label="Launcher">
          {apps.map((app) => (
            <LauncherRow key={app.name}>
              <Pips kind={app.pips} />
              <Tile aria-label={app.name} $bg={app.bg}>
                <svg width="52" height="52" viewBox="0 0 52 52" aria-hidden="true">
                  {app.art}
                </svg>
              </Tile>
            </LauncherRow>
          ))}
          <FoldedApps />
        </Launcher>

        <Window>
          <MenuBar>
            {menus.map((menu) => (
              <Menu key={menu}>
                <u>{menu[0]}</u>
                {menu.slice(1)}
              </Menu>
            ))}
          </MenuBar>
          <Toolbar>
            <Handle />
            {["open", "save", "print", "cam"].map((name) => (
              <ToolButton key={name} name={name} />
            ))}
            <Separator />
            <ToolButton name="board" narrow />
            <SheetPicker>
              <select aria-label="Sheet" defaultValue="1/1">
                <option>1/1</option>
              </select>
              <Arrow />
            </SheetPicker>
            <Separator />
            <ToolButton name="library" />
            <Separator />
            <ToolButton name="scr" />
            <ToolButton name="ulp" />
            <Separator />
            {["zoomFit", "zoomIn", "zoomOut", "zoomDot", "zoomArea"].map((name) => (
              <ToolButton key={name} name={name} />
            ))}
            <Separator />
            <ToolButton name="undo" />
            <ToolButton name="redo" />
            <Separator />
            <ToolButton name="stop" />
            <ToolButton name="go" />
            <Separator />
            <Separator />
            <ToolButton name="help" />
            <Handle />
            <DesignLink aria-label="Design link">
              <svg width="40" height="20" viewBox="0 0 40 20">
                <text x="0" y="10" fontSize="11" fill="#d8143c">design</text>
                <text x="23" y="18" fontSize="10" fill="#111">link</text>
                <path d="M9 11l2 2 2-2M26.500 9v9" stroke="#d8143c" fill="none" />
              </svg>
            </DesignLink>
            <DropButton aria-label="Design link menu">
              <Arrow />
            </DropButton>
          </Toolbar>
          <Toolbar>
            <Handle />
            <ToolButton name="grid" />
          </Toolbar>

          <Workspace>
            <Palette>
              <PaletteHandle />
              {toolColumns.map((group) => (
                <ToolGroup key={group[0]}>
                  {group.map((name, i) =>
                    name ? (
                      <PaletteButton key={name} aria-label={name}>
                        <Icon name={name} />
                      </PaletteButton>
                    ) : (
                      <span key={i} />
                    )
                  )}
                </ToolGroup>
              ))}
            </Palette>

            <Dock>
              <DockHeader>
                <span>Sheets</span>
                <DockButton aria-label="Float">
                  <svg width="11" height="11" viewBox="0 0 11 11">
                    <rect x=".500" y=".500" width="10" height="10" rx="2" fill="none" stroke="#666" />
                    <path d="M4.500 2.500h4v4h-4zM2.500 4.500h4v4h-4z" fill="none" stroke="#666" />
                  </svg>
                </DockButton>
                <DockButton aria-label="Close">
                  <svg width="11" height="11" viewBox="0 0 11 11">
                    <rect x=".500" y=".500" width="10" height="10" rx="2" fill="none" stroke="#666" />
                    <path d="M3 3l5 5M8 3l-5 5" stroke="#444" strokeWidth="2" />
                  </svg>
                </DockButton>
              </DockHeader>
              <SheetArea>
                <SheetList>
                  <Thumb width="53" height="40" viewBox="0 0 53 40" aria-hidden="true">
                    <path d="M43.500 4v14M1 18.500h10M43 19.500h8M16 33.500h12M43 5.500h6" stroke="#8fc4b4" />
                    <path d="M10.500 17.500h32v4h-32zM49.500 3.500h4v7h-4z" fill="none" stroke="#a4abbd" />
                    <path d="M6 4h3v7H6zM19 31h6v5h-6zM44 5h4v4h-4zM8 14h2v7H8z" fill="#8199a4" opacity=".600" />
                  </Thumb>
                  <SheetNumber>1</SheetNumber>
                </SheetList>
                <ScrollBar />
              </SheetArea>
            </Dock>

            <Editor>
              <CommandRow>
                <Coordinates>0.1 inch (2.7 1.9)</Coordinates>
                <Blank />
                <CommandBox>
                  <input type="text" aria-label="Command" />
                  <button aria-label="Command history">
                    <Arrow />
                  </button>
                </CommandBox>
              </CommandRow>
              <Sheet>
                <Viewport>
                  <Schematic />
                </Viewport>
                <ScrollBar />
                <ScrollBar horizontal />
              </Sheet>
            </Editor>
          </Workspace>

          <StatusBar>
            <svg width="14" height="18" viewBox="0 0 14 18" aria-hidden="true">
              <path d="M7 1L1 10l5 1v6l7-9-5-1z" fill="#76b82a" />
            </svg>
          </StatusBar>
        </Window>
      </Desktop>
    </Screen>
  );
}

const Screen = styled.div`
  height: 100vh;
  display: flex;
  flex-direction: column;
`;

const Panel = styled.header`
  height: 24px;
  flex: none;
  display: flex;
  justify-content: space-between;
  align-items: center;
  padding: 0 7px 0 6px;
  background: linear-gradient(#5d5a50, #403e39);
  color: #dfdbd2;
  font-family: "Open Sans", sans-serif;
  font-size: 14px;
`;

const Title = styled.h1`
  margin: 0;
  font-size: 15px;
  font-weight: 600;
  white-space: nowrap;
`;

const Tray = styled.div`
  display: flex;
  align-items: center;
  gap: 13px;
`;

const Keyboard = styled.span`
  width: 20px;
  height: 20px;
  border-radius: 2px;
  background: #dfdbd2;
  color: #45433e;
  line-height: 20px;
  text-align: center;
`;

const Desktop = styled.div`
  flex: 1;
  min-height: 0;
  display: flex;
`;

const Launcher = styled.nav`
  width: 65px;
  flex: none;
  padding-top: 6px;
  overflow: hidden;
  border-right: 1px solid #f4f2ef;
  background: linear-gradient(90deg, #868d91, #7c8387 60%, #666d71);
`;

const Stack = styled.svg`
  display: block;
  margin-top: -6px;
`;

const LauncherRow = styled.div`
  height: 59px;
  display: flex;
`;

const PipColumn = styled.svg`
  margin-top: 18px;
`;

const Tile = styled.button`
  width: 52px;
  height: 52px;
  border-radius: 4px;
  background: ${(props) => props.$bg};
  box-shadow: inset 0 0 0 1px rgba(255, 255, 255, 0.25), 0 0 2px rgba(0, 0, 0, 0.3);

  svg {
    display: block;
    overflow: visible;
  }
`;

const Window = styled.main`
  flex: 1;
  min-width: 0;
  display: flex;
  flex-direction: column;
`;

const MenuBar = styled.nav`
  height: 20px;
  flex: none;
  display: flex;
  gap: 1px;
  padding-left: 3px;
  border-bottom: 1px solid #cfccc7;
`;

const Menu = styled.button`
  padding: 0 7px;
  line-height: 18px;

  u {
    text-underline-offset: 2px;
  }
`;

const Toolbar = styled.div`
  height: 31px;
  flex: none;
  display: flex;
  align-items: center;
  border-bottom: 1px solid #b4b1ac;
  background: linear-gradient(#f7f4f1, #ece9e4);
`;

const Handle = styled.span`
  width: 4px;
  height: 17px;
  margin: 0 4px;
  background: radial-gradient(circle at 1px 1px, #b8b5b0 1px, transparent 1px) 0 0 / 3px 3px;
`;

const Glyph = styled.svg`
  display: block;
  overflow: visible;
  font-family: "Liberation Sans", sans-serif;
`;

const BarButton = styled.button`
  width: ${(props) => (props.$narrow ? "22px" : "25px")};
  height: 25px;
  display: flex;
  align-items: center;
  justify-content: center;
`;

const Separator = styled.span`
  width: 7px;
  height: 12px;
  background: linear-gradient(90deg, #d2cfca 50%, #fff 50%) 3px 0 / 2px 12px no-repeat;
`;

const SheetPicker = styled.div`
  width: 54px;
  height: 23px;
  margin: 0 1px 0 3px;
  display: flex;
  align-items: center;
  padding-right: 6px;
  border: 1px solid #a9a6a1;
  border-radius: 3px;
  background: linear-gradient(#fff, #f0eeeb);

  select {
    flex: 1;
    min-width: 0;
    padding: 0 0 0 4px;
    appearance: none;
    border: 0;
    background: none;
    color: inherit;
    font: inherit;
  }
`;

const DesignLink = styled.button`
  width: 55px;
  height: 23px;
  display: flex;
  align-items: center;
  justify-content: center;
  margin-left: 5px;
  border: 1px solid #333;
  border-radius: 2px;
  background: linear-gradient(#e8e8e8, #cfcfcf);
  font-family: "Liberation Sans", sans-serif;
`;

const DropButton = styled.button`
  width: 20px;
`;

const Workspace = styled.div`
  flex: 1;
  min-height: 0;
  display: flex;
`;

const Palette = styled.aside`
  width: 55px;
  flex: none;
  padding: 0 3px 0 4px;
  background: linear-gradient(90deg, #f7f4f1, #edeae6);
`;

const PaletteHandle = styled.div`
  width: 17px;
  height: 6px;
  margin: 5px auto 1px;
  background: radial-gradient(circle at 1px 1px, #b8b5b0 1px, transparent 1px) 0 0 / 3px 3px;
`;

const ToolGroup = styled.div`
  display: grid;
  grid-template-columns: 24px 24px;
  grid-auto-rows: 24px;

  & + & {
    padding-top: 7px;
    background: linear-gradient(#d0cdc8, #d0cdc8) 6px 4px / 36px 1px no-repeat;
  }
`;

const PaletteButton = styled.button`
  display: flex;
  align-items: center;
  justify-content: center;
`;

const Dock = styled.section`
  width: 77px;
  flex: none;
  display: flex;
  flex-direction: column;
  border-left: 2px solid #b9b6b2;
`;

const DockHeader = styled.div`
  height: 19px;
  flex: none;
  display: flex;
  align-items: center;
  gap: 3px;
  padding-left: 3px;
`;

const DockButton = styled.button`
  height: 11px;
  line-height: 0;
`;

const SheetArea = styled.div`
  flex: 1;
  min-height: 0;
  display: flex;
  border: 1px solid #b4b1ac;
  border-left: 0;
  background: #fff;
`;

const SheetList = styled.div`
  flex: 1;
  display: flex;
  flex-direction: column;
  align-items: center;
  padding: 2px 6px 0 1px;
`;

const Thumb = styled.svg`
  flex: none;
  background: #c2dcee;
`;

const SheetNumber = styled.span`
  width: 14px;
  height: 15px;
  margin-top: 2px;
  border: 1px solid #2375ab;
  background: #308cc6;
  color: #fff;
  line-height: 13px;
  text-align: center;
`;

const Track = styled.div`
  width: ${(props) => (props.$horizontal ? "auto" : "14px")};
  height: ${(props) => (props.$horizontal ? "14px" : "auto")};
  flex: none;
  display: flex;
  flex-direction: ${(props) => (props.$horizontal ? "row" : "column")};
  justify-content: space-between;
  border: 0 solid #b4b1ac;
  border-width: ${(props) => (props.$horizontal ? "1px 0 0" : "0 0 0 1px")};
  background: linear-gradient(${(props) => (props.$horizontal ? "180deg" : "90deg")}, #fbfaf9, #efedea);
`;

const ScrollButton = styled.button`
  width: ${(props) => (props.$horizontal ? "13px" : "100%")};
  height: ${(props) => (props.$horizontal ? "100%" : "13px")};
  display: flex;
  align-items: center;
  justify-content: center;
  border: 0 solid #b4b1ac;
  border-width: ${(props) =>
    props.$horizontal
      ? props.$last ? "0 0 0 1px" : "0 1px 0 0"
      : props.$last ? "1px 0 0" : "0 0 1px"};
  background: linear-gradient(#fff, #f3f1ee);
`;

const Editor = styled.section`
  flex: 1;
  min-width: 0;
  display: flex;
  flex-direction: column;
  padding-left: 6px;
`;

const CommandRow = styled.div`
  height: 23px;
  flex: none;
  display: flex;
  gap: 1px;
  padding: 1px 0;
`;

const Coordinates = styled.output`
  width: 118px;
  padding-left: 4px;
  border: 1px solid #b4b1ac;
  border-top-color: #7d7a76;
  border-left-color: #7d7a76;
  line-height: 20px;
  white-space: nowrap;
`;

const Blank = styled.span`
  width: 14px;
  border: 1px solid #b4b1ac;
  border-top-color: #7d7a76;
  border-left-color: #7d7a76;
`;

const CommandBox = styled.div`
  flex: 1;
  min-width: 0;
  display: flex;
  border: 1px solid #a9a6a1;
  border-radius: 3px;
  background: #fff;

  input {
    flex: 1;
    min-width: 0;
    border: 0;
    background: none;
    font: inherit;
  }

  button {
    width: 19px;
    border-left: 1px solid #b4b1ac;
    background: linear-gradient(#fff, #f0eeeb);
  }
`;

const Sheet = styled.div`
  flex: 1;
  min-height: 0;
  display: grid;
  grid-template-columns: minmax(0, 1fr) 14px;
  grid-template-rows: minmax(0, 1fr) 14px;
`;

const Viewport = styled.div`
  overflow: hidden;
  background: #fff;
`;

const Drawing = styled.svg`
  display: block;
  font-family: "Liberation Sans", sans-serif;
`;

const Layer = styled.g`
  fill: none;
  mix-blend-mode: multiply;
  shape-rendering: crispEdges;
`;

const Pin = styled.circle`
  stroke-width: 2px;
  shape-rendering: auto;
`;

const Zigzag = styled.path`
  stroke-width: 2px;
  shape-rendering: auto;
`;

const StatusBar = styled.footer`
  height: 28px;
  flex: none;
  display: flex;
  justify-content: flex-end;
  align-items: center;
  padding: 0 24px 2px 0;
`;
